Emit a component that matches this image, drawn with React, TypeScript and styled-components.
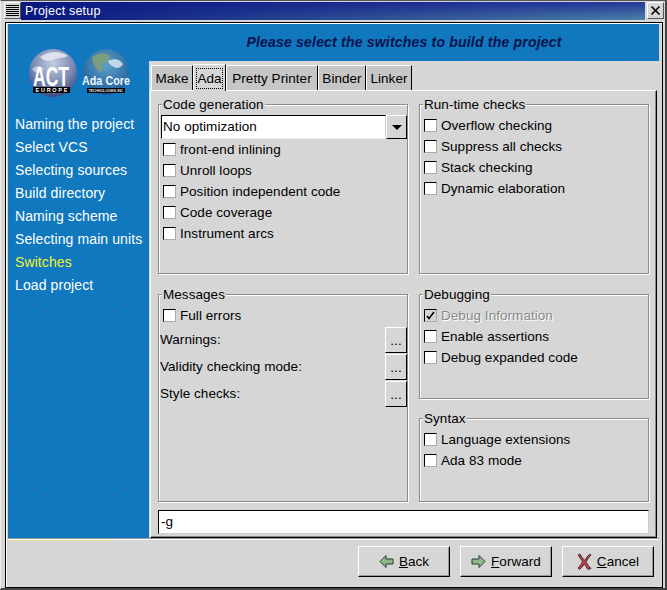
import React from "react";
import styled, { createGlobalStyle } from "styled-components";

const gray = "#d6d6d6";
const blue = "#0f78bf";
const speckle = `
  radial-gradient(circle at 3px 5px, #2a6cb0 0.7px, transparent 1px),
  radial-gradient(circle at 14px 11px, #2a6cb0 0.7px, transparent 1px),
  radial-gradient(circle at 9px 19px, #1c70b8 0.7px, transparent 1px)
`;

const Global = createGlobalStyle`
  html, body { margin: 0; padding: 0; background: ${gray}; }
  body { font-family: "Liberation Sans", Arial, sans-serif; font-size: 13.5px; letter-spacing: 0.05px; color: #000; }
`;

const Win = styled.div`
  width: 667px;
  height: 590px;
  box-sizing: border-box;
  background: ${gray};
  border-top: 1px solid #555;
  border-right: 2px solid #444;
  border-bottom: 2px solid #444;
  border-left: 1px solid #eee;
  padding: 1px 2px 0 4px;
  display: flex;
  flex-direction: column;
  overflow: hidden;
`;

const TitleBar = styled.div`
  height: 18px;
  display: flex;
  margin: 0 -1px 2px -1px;
`;

const WinButton = styled.div`
  width: 17px;
  height: 17px;
  box-sizing: border-box;
  flex: none;
  display: flex;
  align-items: center;
  justify-content: center;
  background: ${gray};
  border: 1px solid #fff;
  border-right-color: #555;
  border-bottom-color: #555;
`;

const TitleText = styled.div`
  flex: 1;
  margin-right: 2px;
  background:
    linear-gradient(90deg, #0a1880 0%, rgba(10, 24, 128, 0) 100%),
    linear-gradient(180deg, #26369a, #4c82a6);
  color: #fff;
  font-size: 12.5px;
  letter-spacing: 0.2px;
  line-height: 18px;
  padding-left: 4px;
`;

const Frame = styled.div`
  flex: 1;
  min-height: 0;
  border: 1px solid #000;
  box-shadow: inset 1px 1px 0 #fff;
  padding: 1px 3px 0 2px;
  display: flex;
  flex-direction: column;
`;

const Body = styled.div`
  height: 514px;
  display: grid;
  grid-template-columns: 141px 1fr;
  flex: none;
`;

const Sidebar = styled.div`
  background-color: ${blue};
  background-image: ${speckle};
  background-size: 23px 23px;
  display: flex;
  flex-direction: column;
  padding: 0 0 0 7px;
`;

const Logos = styled.svg`
  display: block;
  width: 134px;
  height: 80px;
  margin: 15px 0 0 -7px;
  flex: none;
`;

const NavList = styled.div`
  display: flex;
  flex-direction: column;
  margin-top: -6px;
`;

const NavItem = styled.div<{ $on?: boolean }>`
  height: 23px;
  line-height: 23px;
  font-size: 14px;
  letter-spacing: 0.1px;
  color: ${(p) => (p.$on ? "#f4f430" : "#fff")};
  white-space: nowrap;
`;

const Main = styled.div`
  display: flex;
  flex-direction: column;
  background: ${gray};
  min-width: 0;
`;

const Header = styled.div`
  height: 37px;
  background-color: ${blue};
  background-image: ${speckle};
  background-size: 23px 23px;
  color: #06124c;
  font-weight: bold;
  font-style: italic;
  font-size: 14px;
  letter-spacing: 0.2px;
  line-height: 36px;
  text-align: center;
  flex: none;
`;

const Tabs = styled.div`
  display: flex;
  align-items: flex-end;
  height: 29px;
  margin-left: 2px;
  flex: none;
`;

const Tab = styled.div<{ $on?: boolean; $w: number }>`
  width: ${(p) => p.$w}px;
  height: ${(p) => (p.$on ? 27 : 25)}px;
  margin-bottom: ${(p) => (p.$on ? -1 : 0)}px;
  box-sizing: border-box;
  display: flex;
  align-items: center;
  justify-content: center;
  background: ${(p) => (p.$on ? gray : "#c6c6c6")};
  border-top: 1px solid #fff;
  border-left: 1px solid #fff;
  border-right: 1px solid #000;
  position: relative;
  white-space: nowrap;
`;

const Focus = styled.span`
  border: 1px dotted #000;
  line-height: 19px;
`;

const Pane = styled.div`
  flex: 1;
  min-height: 0;
  width: 507px;
  margin-left: 1px;
  box-sizing: border-box;
  border-top: 1px solid #fff;
  border-left: 1px solid #fff;
  border-right: 1px solid #000;
  border-bottom: 1px solid #000;
  box-shadow: inset -1px -1px 0 #888;
  padding: 13px 7px 2px 7px;
  display: flex;
  flex-direction: column;
`;

const Columns = styled.div`
  display: grid;
  grid-template-columns: 250px 230px;
  column-gap: 11px;
  flex: none;
`;

const Col = styled.div`
  display: flex;
  flex-direction: column;
`;

const Group = styled.div<{ $h: number; $after?: number }>`
  position: relative;
  height: ${(p) => p.$h}px;
  margin-bottom: ${(p) => p.$after ?? 0}px;
  box-sizing: border-box;
  border: 1px solid #8c8c8c;
  box-shadow: 1px 1px 0 #fff, inset 1px 1px 0 #fff;
  padding: 10px 0 0 2px;
  display: flex;
  flex-direction: column;
`;

const GroupTitle = styled.div`
  position: absolute;
  top: -8px;
  left: 3px;
  background: ${gray};
  padding: 0 1px;
  line-height: 16px;
`;

const Combo = styled.div`
  display: flex;
  height: 24px;
  flex: none;
`;

const ComboText = styled.div`
  width: 225px;
  box-sizing: border-box;
  background: #fff;
  border-top: 1px solid #000;
  border-left: 1px solid #000;
  border-right: 1px solid #ccc;
  border-bottom: 1px solid #eee;
  line-height: 22px;
  padding-left: 1px;
`;

const ComboButton = styled.div`
  width: 21px;
  box-sizing: border-box;
  border: 1px solid #fff;
  border-right-color: #000;
  border-bottom-color: #000;
  display: flex;
  align-items: center;
  justify-content: center;
  &::after {
    content: "";
    border-left: 5px solid transparent;
    border-right: 5px solid transparent;
    border-top: 5px solid #000;
  }
`;

const CheckRow = styled.div<{ $off?: boolean }>`
  height: 21px;
  display: flex;
  align-items: center;
  gap: 4px;
  padding-left: 2px;
  flex: none;
  white-space: nowrap;
  color: ${(p) => (p.$off ? "#8a8a8a" : "#000")};
  text-shadow: ${(p) => (p.$off ? "1px 1px 0 #fff" : "none")};
`;

const Box = styled.span<{ $off?: boolean }>`
  width: 13px;
  height: 13px;
  box-sizing: border-box;
  flex: none;
  background: ${(p) => (p.$off ? gray : "#fff")};
  border-top: 1px solid #000;
  border-left: 1px solid #000;
  border-right: 1px solid #aaa;
  border-bottom: 1px solid #aaa;
  display: flex;
  align-items: center;
  justify-content: center;
`;

const OptionRow = styled.div`
  height: 27px;
  margin-left: -1px;
  display: flex;
  align-items: center;
  justify-content: space-between;
  flex: none;
`;

const DotsButton = styled.div`
  width: 22px;
  height: 26px;
  box-sizing: border-box;
  border: 1px solid #fff;
  border-right-color: #000;
  border-bottom-color: #000;
  text-align: center;
  line-height: 26px;
`;

const Entry = styled.div`
  height: 24px;
  box-sizing: border-box;
  margin-top: 8px;
  background: #fff;
  border-top: 1px solid #000;
  border-left: 1px solid #000;
  border-right: 1px solid #ccc;
  border-bottom: 1px solid #ccc;
  padding-left: 2px;
  line-height: 22px;
`;

const Separator = styled.div`
  height: 2px;
  background: #fff;
  border-top: 1px solid #999;
  box-sizing: border-box;
  flex: none;
  position: relative;
  &::before {
    content: "";
    position: absolute;
    left: 0;
    top: 1px;
    width: 103px;
    border-top: 1px dotted #dede60;
  }
`;

const ButtonBar = styled.div`
  display: flex;
  justify-content: flex-end;
  gap: 10px;
  padding: 6px 5px 0 0;
`;

const ActionButton = styled.div`
  width: 92px;
  height: 31px;
  box-sizing: border-box;
  border: 1px solid #fff;
  border-right-color: #000;
  border-bottom-color: #000;
  box-shadow: inset -1px -1px 0 #999;
  display: flex;
  align-items: center;
  justify-content: center;
  gap: 5px;
`;

const Check = ({ label, checked, off }: { label: string; checked?: boolean; off?: boolean }) => (
  <CheckRow $off={off}>
    <Box $off={off}>
      {checked && (
        <svg width="9" height="9" viewBox="0 0 9 9">
          <path d="M1 5l2 2.500L8 1" fill="none" stroke="#000" strokeWidth="1.6" />
        </svg>
      )}
    </Box>
    {label}
  </CheckRow>
);

const Option = ({ label }: { label: string }) => (
  <OptionRow>
    {label}
    <DotsButton>...</DotsButton>
  </OptionRow>
);

function LogoArt() {
  return (
    <Logos viewBox="0 0 134 80">
      <defs>
        <radialGradient id="g1" cx="0.5" cy="0.3" r="0.75">
          <stop offset="0" stopColor="#c4cde0" />
          <stop offset="0.6" stopColor="#7585b0" />
          <stop offset="1" stopColor="#2c3f78" />
        </radialGradient>
        <radialGradient id="g2" cx="0.5" cy="0.35" r="0.7">
          <stop offset="0" stopColor="#5fa0c8" />
          <stop offset="0.7" stopColor="#2f6fa8" />
          <stop offset="1" stopColor="#1a4a88" />
        </radialGradient>
      </defs>
      <circle cx="45" cy="34" r="24" fill="url(#g1)" />
      <path d="M32 18c8-6 20-7 28-1-6 3-10 1-15 4-5 2-9 1-13-3z" fill="#e6eaf2" opacity=".85" />
      <path d="M24 30c5-4 9-3 12 0-3 4-8 6-12 0z" fill="#e6e9f2" opacity=".6" />
      <text x="43" y="47" textAnchor="middle" fontFamily="Liberation Sans" fontWeight="bold" fontSize="27" fill="#fff" textLength="36" lengthAdjust="spacingAndGlyphs">ACT</text>
      <rect x="25" y="48" width="37" height="6" fill="#000" />
      <text x="43.5" y="53" textAnchor="middle" fontFamily="Liberation Sans" fontWeight="bold" fontSize="5.5" fill="#fff" textLength="32">EUROPE</text>
      <circle cx="98" cy="33" r="23" fill="url(#g2)" />
      <path d="M84 18c6-4 12-5 17-2 3 5-2 8-6 8-2 4 1 7-3 9-4-3-8-9-8-15z" fill="#7f9f78" opacity=".9" />
      <path d="M100 22c6-3 12-2 15 3-2 4-7 5-9 3-3-1-5-3-6-6z" fill="#dfeaf2" opacity=".8" />
      <text x="98" y="46" textAnchor="middle" fontFamily="Liberation Sans" fontWeight="bold" fontSize="12" fill="#eef6ff" textLength="48" lengthAdjust="spacingAndGlyphs">Ada Core</text>
      <rect x="79" y="49" width="38" height="5" fill="#000" />
      <text x="98" y="53" textAnchor="middle" fontFamily="Liberation Sans" fontWeight="bold" fontSize="4" fill="#ddd" textLength="35">TECHNOLOGIES, INC</text>
    </Logos>
  );
}

const nav = [
  "Naming the project",
  "Select VCS",
  "Selecting sources",
  "Build directory",
  "Naming scheme",
  "Selecting main units",
  "Switches",
  "Load project",
];

export default function App() {
  return (
    <Win>
      <Global />
      <TitleBar>
        <WinButton>
          <svg width="13" height="13" viewBox="0 0 13 13">
            <path d="M0 1.500h13M0 3.500h13M0 5.500h13M0 7.500h13M0 9.500h13M0 11.500h13" stroke="#000" />
          </svg>
        </WinButton>
        <TitleText>Project setup</TitleText>
        <WinButton>
          <svg width="11" height="11" viewBox="0 0 11 11">
            <path d="M1.500 1.500l8 8M9.500 1.500l-8 8" stroke="#000" strokeWidth="1.6" />
          </svg>
        </WinButton>
      </TitleBar>
      <Frame>
        <Body>
          <Sidebar>
            <LogoArt />
            <NavList>
              {nav.map((n) => (
                <NavItem key={n} $on={n === "Switches"}>{n}</NavItem>
              ))}
            </NavList>
          </Sidebar>
          <Main>
            <Header>Please select the switches to build the project</Header>
            <Tabs>
              <Tab $w={42}>Make</Tab>
              <Tab $w={33} $on><Focus>Ada</Focus></Tab>
              <Tab $w={92}>Pretty Printer</Tab>
              <Tab $w={48}>Binder</Tab>
              <Tab $w={46}>Linker</Tab>
            </Tabs>
            <Pane>
              <Columns>
                <Col>
                  <Group $h={170} $after={20}>
                    <GroupTitle>Code generation</GroupTitle>
                    <Combo>
                      <ComboText>No optimization</ComboText>
                      <ComboButton />
                    </Combo>
                    <Check label="front-end inlining" />
                    <Check label="Unroll loops" />
                    <Check label="Position independent code" />
                    <Check label="Code coverage" />
                    <Check label="Instrument arcs" />
                  </Group>
                  <Group $h={208}>
                    <GroupTitle>Messages</GroupTitle>
                    <Check label="Full errors" />
                    <Option label="Warnings:" />
                    <Option label="Validity checking mode:" />
                    <Option label="Style checks:" />
                  </Group>
                </Col>
                <Col>
                  <Group $h={170} $after={20}>
                    <GroupTitle>Run-time checks</GroupTitle>
                    <Check label="Overflow checking" />
                    <Check label="Suppress all checks" />
                    <Check label="Stack checking" />
                    <Check label="Dynamic elaboration" />
                  </Group>
                  <Group $h={105} $after={19}>
                    <GroupTitle>Debugging</GroupTitle>
                    <Check label="Debug Information" checked off />
                    <Check label="Enable assertions" />
                    <Check label="Debug expanded code" />
                  </Group>
                  <Group $h={84}>
                    <GroupTitle>Syntax</GroupTitle>
                    <Check label="Language extensions" />
                    <Check label="Ada 83 mode" />
                  </Group>
                </Col>
              </Columns>
              <Entry>-g</Entry>
            </Pane>
          </Main>
        </Body>
        <Separator />
        <ButtonBar>
          <ActionButton>
            <svg width="15" height="15" viewBox="0 0 15 15">
              <path d="M1 7.500L7 1.500V5h7v5H7v3.500z" fill="#8fb88a" stroke="#2c3a2c" />
            </svg>
            <span><u>B</u>ack</span>
          </ActionButton>
          <ActionButton>
            <svg width="15" height="15" viewBox="0 0 15 15">
              <path d="M14 7.500L8 1.500V5H1v5h7v3.500z" fill="#8fb88a" stroke="#2c3a2c" />
            </svg>
            <span><u>F</u>orward</span>
          </ActionButton>
          <ActionButton>
            <svg width="15" height="17" viewBox="0 0 15 17">
              <path d="M3 1c2 3 3 5 4.500 6.500C9 5 11 2.500 13 1l1 1c-2 2.500-4 5-5 7 1.500 2.500 3 4.500 5 6.500l-3 1c-1.500-2-2.500-4-3.500-5.500-1.500 2-3 4-5 5.500L1 15c2-2 3.500-4.500 4.500-6.500C4 6.500 2.500 4 1 2z" fill="#b8404a" stroke="#3a1a1a" strokeWidth=".8" />
            </svg>
            <span><u>C</u>ancel</span>
          </ActionButton>
        </ButtonBar>
      </Frame>
    </Win>
  );
}
